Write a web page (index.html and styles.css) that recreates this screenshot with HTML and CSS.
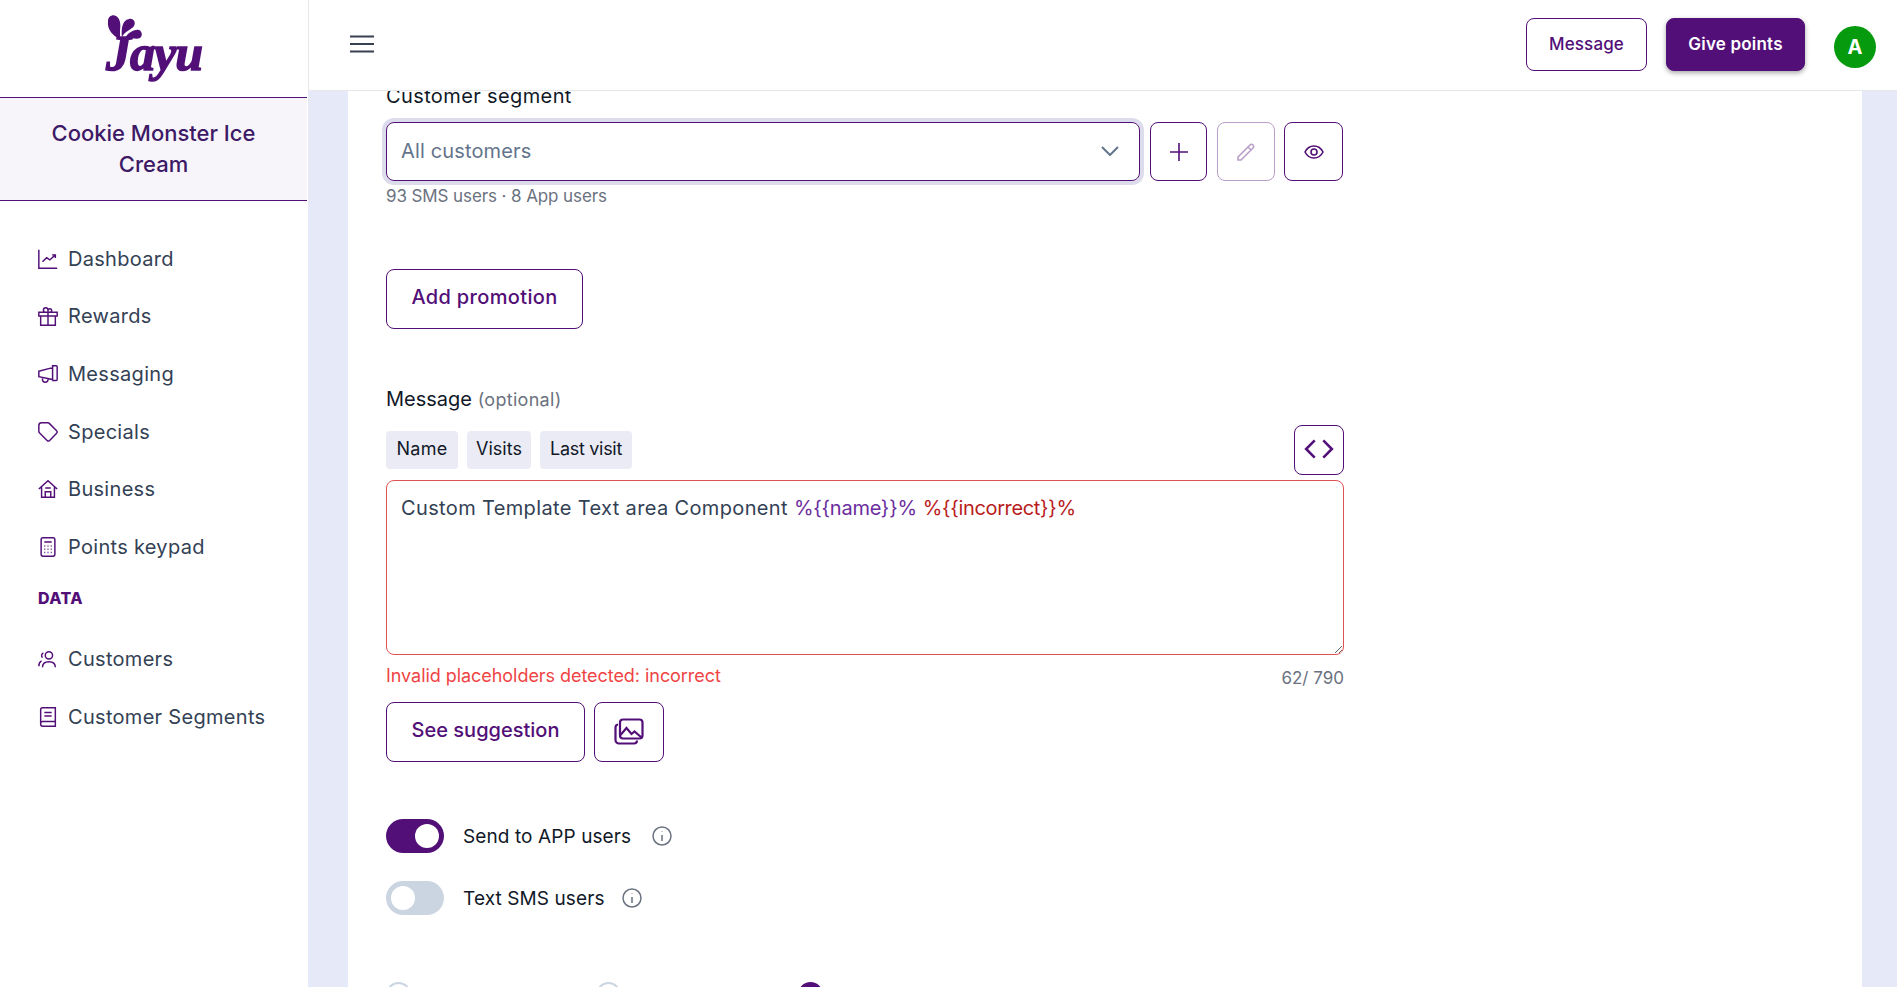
FILE: index.html
```html
<!DOCTYPE html>
<html lang="en">

<head>
    <meta charset="UTF-8">
    <meta name="viewport" content="width=device-width, initial-scale=1.0">
    <title>Create Campaign</title>
    <link rel="stylesheet" href="styles.css">
</head>

<body>
    <aside class="sidebar">
        <div class="logo">
            <svg class="logo-drops" viewBox="104 12 42 30" width="42" height="30">
                <path d="M120 39C113 36 107 30 108 21C108 16 113 14 116 16C120 18 121 24 120 30C120 33 120 36 120 39Z" />
                <path d="M122 37C121 30 122 20 129 19C134 18 136 23 134 26C131 30 125 31 122 37Z" />
                <path d="M125 38C128 33 134 29 139 30C142 31 143 36 140 38C136 40 130 37 125 38Z" />
            </svg>
            <span class="logo-text">Jayu</span>
        </div>
        <div class="store">Cookie Monster Ice Cream</div>
        <nav class="nav">
            <a class="nav-item">
                <svg class="nav-icon" viewBox="0 0 24 24"><path d="M2 2v20h20M6 15l4.500-4.500 3.500 2.500 6-5.500M16.500 7.500H20V11" /></svg>
                Dashboard
            </a>
            <a class="nav-item">
                <svg class="nav-icon" viewBox="0 0 24 24"><path d="M12 8v14m0-14V6a2 2 0 112 2h-2zm0 0V5.500A2.500 2.500 0 109.500 8H12zM2 8h20v4H2zM4 12v10h16V12" /></svg>
                Rewards
            </a>
            <a class="nav-item">
                <svg class="nav-icon" viewBox="0 0 24 24"><path d="M2 9l15-4v13L2 15zM17 3h4a1 1 0 011 1v14a1 1 0 01-1 1h-4zM6 16v2a3 3 0 006 0v-1" /></svg>
                Messaging
            </a>
            <a class="nav-item">
                <svg class="nav-icon" viewBox="0 0 24 24"><path d="M7 7h.01M7 2h5c.500 0 1 .2 1.400.6l8 8a2 2 0 010 2.800l-7.600 7.800a2 2 0 01-2.800 0l-8.400-8.400A2 2 0 012 11V5a3 3 0 013-3z" /></svg>
                Specials
            </a>
            <a class="nav-item">
                <svg class="nav-icon" viewBox="0 0 24 24"><path d="M2 12L12 3l10 9M5 10v11h14V10M9 21v-6h6v6M9 11h6" /></svg>
                Business
            </a>
            <a class="nav-item">
                <svg class="nav-icon" viewBox="0 0 24 24"><rect x="4.500" y="2" width="15" height="20" rx="2" /><path d="M8 6.500h8M8 11h1M11.500 11h1M15 11h1M8 14.500h1M11.500 14.500h1M15 14.500h1M8 18h1M11.500 18h1M15 18h1" /></svg>
                Points keypad
            </a>
            <div class="nav-title">DATA</div>
            <a class="nav-item">
                <svg class="nav-icon" viewBox="0 0 24 24"><circle cx="13" cy="8" r="4" /><path d="M6 21c0-4 3-6 7-6s7 2 7 6M7 5.500a3 3 0 00-1 5M2 20c0-3 1-5 3-6" /></svg>
                Customers
            </a>
            <a class="nav-item">
                <svg class="nav-icon" viewBox="0 0 24 24"><path d="M4 19V4a2 2 0 012-2h14v20H6a2 2 0 01-2-2v-1a2 2 0 012-2h14M8 7h8M8 11h8" /></svg>
                Customer Segments
            </a>
        </nav>
    </aside>

    <div class="page">
        <header class="topbar">
            <button class="menu-btn" aria-label="Menu">
                <svg viewBox="0 0 24 18" width="24" height="18"><path d="M0 1.500h24M0 9h24M0 16.500h24" /></svg>
            </button>
            <div class="top-actions">
                <button class="btn btn-top">Message</button>
                <button class="btn btn-top btn-solid">Give points</button>
                <div class="avatar">A</div>
            </div>
        </header>

        <main class="main">
            <form class="card">
                <label class="label segment-label">Customer segment</label>
                <div class="segment-row">
                    <div class="select">
                        All customers
                        <svg class="chevron" viewBox="0 0 18 10" width="18" height="10"><path d="M1 1l8 8 8-8" /></svg>
                    </div>
                    <button type="button" class="btn icon-btn plus-btn">
                        <svg viewBox="0 0 20 20" width="20" height="20"><path d="M10 1v18M1 10h18" /></svg>
                    </button>
                    <button type="button" class="btn icon-btn pencil-btn">
                        <svg viewBox="0 0 20 20" width="20" height="20"><path d="M2 15L14 3a2 2 0 013 0 2 2 0 010 3L5 18H2zM12 5l3 3" /></svg>
                    </button>
                    <button type="button" class="btn icon-btn eye-btn">
                        <svg viewBox="0 0 20 20" width="20" height="20"><path d="M1 10c2-4 5-6 9-6s7 2 9 6c-2 4-5 6-9 6s-7-2-9-6z" /><circle cx="10" cy="10" r="3" /></svg>
                    </button>
                </div>
                <p class="hint">93 SMS users · 8 App users</p>

                <button type="button" class="btn btn-large promo-btn">Add promotion</button>

                <label class="label msg-label">Message <span class="optional">(optional)</span></label>
                <div class="tag-row">
                    <span class="tag tag-name">Name</span>
                    <span class="tag tag-visits">Visits</span>
                    <span class="tag tag-last">Last visit</span>
                    <button type="button" class="btn code-btn">
                        <svg viewBox="0 0 28 20" width="30" height="22"><path d="M10 2L2 10l8 8M18 2l8 8-8 8" /></svg>
                    </button>
                </div>
                <div class="textarea">Custom Template Text area Component <span class="ph-ok">%{{name}}%</span> <span class="ph-bad">%{{incorrect}}%</span></div>
                <div class="textarea-foot">
                    <span class="error">Invalid placeholders detected: incorrect</span>
                    <span class="count">62/ 790</span>
                </div>
                <div class="suggest-row">
                    <button type="button" class="btn btn-large suggest-btn">See suggestion</button>
                    <button type="button" class="btn image-btn">
                        <svg viewBox="0 0 30 27" width="30" height="27"><rect x="6" y="1.500" width="22.500" height="19" rx="3" /><path d="M4 6.500a3 3 0 00-2.500 3V22a3.500 3.500 0 003.500 3.500h15a3 3 0 003-3M6.500 17l6-7 5 6 3-2.500 7 6" /></svg>
                    </button>
                </div>

                <div class="toggle-row first-toggle">
                    <span class="toggle on"><span class="knob"></span></span>
                    <span class="toggle-text">Send to APP users</span>
                    <svg class="info info-app" viewBox="0 0 20 20" width="20" height="20"><circle cx="10" cy="10" r="9" /><path d="M10 9v6M10 5.500v.5" /></svg>
                </div>
                <div class="toggle-row">
                    <span class="toggle"><span class="knob"></span></span>
                    <span class="toggle-text">Text SMS users</span>
                    <svg class="info info-sms" viewBox="0 0 20 20" width="20" height="20"><circle cx="10" cy="10" r="9" /><path d="M10 9v6M10 5.500v.5" /></svg>
                </div>

                <div class="radio-row">
                    <span class="radio radio-first"></span>
                    <span class="radio"></span>
                    <span class="radio checked"></span>
                </div>
            </form>
        </main>
    </div>
</body>
</html>
```
FILE: styles.css
```css
* {
    box-sizing: border-box;
}
body {
    margin: 0;
    height: 987px;
    display: flex;
    overflow: hidden;
    font-family: "Inter", "Noto Sans", sans-serif;
    color: #111827;
    background-color: #e6e9f8;
}
button {
    font-family: inherit;
    cursor: pointer;
}

/* sidebar */
.sidebar {
    width: 308px;
    flex-shrink: 0;
    background-color: white;
}
.logo {
    height: 97px;
    display: flex;
    flex-direction: column;
    align-items: center;
    padding-top: 12px;
}
.logo-drops {
    fill: #520f78;
    margin-right: 58px;
    flex-shrink: 0;
}
.logo-text {
    font-family: "Liberation Serif", serif;
    font-style: italic;
    font-weight: bold;
    font-size: 50px;
    line-height: 40px;
    letter-spacing: -1px;
    margin-top: -9px;
    color: #520f78;
    -webkit-text-stroke: 1.5px #520f78;
}
.store {
    width: 307px;
    height: 104px;
    padding: 20px 40px 0;
    border-top: 1px solid #520f78;
    border-bottom: 1px solid #520f78;
    background-color: #f7f5fa;
    color: #3e1a66;
    font-size: 22px;
    font-weight: 500;
    line-height: 31px;
    text-align: center;
}
.nav {
    padding: 29px 0 0 37px;
}
.nav-item {
    height: 57.6px;
    display: flex;
    align-items: center;
    gap: 9px;
    font-size: 20px;
    letter-spacing: 0.3px;
    color: #334155;
}
.nav-icon {
    width: 22px;
    height: 22px;
    fill: none;
    stroke: #520f78;
    stroke-width: 1.6;
}
.nav-title {
    height: 55px;
    margin-left: 1px;
    padding-top: 12px;
    font-size: 16px;
    line-height: 20px;
    font-weight: 800;
    letter-spacing: 0.4px;
    color: #520f78;
}

/* top bar */
.page {
    flex: 1;
    display: flex;
    flex-direction: column;
    min-width: 0;
}
.topbar {
    height: 91px;
    flex-shrink: 0;
    display: flex;
    align-items: center;
    justify-content: space-between;
    padding: 0 21px 2px 41px;
    background-color: white;
    border-left: 1px solid #e5e7eb;
    border-bottom: 1px solid #e5e7eb;
}
.menu-btn {
    padding: 0;
    border: none;
    background: none;
    display: flex;
}
.menu-btn svg {
    fill: none;
    stroke: #374151;
    stroke-width: 2;
}
.top-actions {
    display: flex;
    align-items: center;
}
.btn {
    background-color: white;
    border: 1px solid #520f78;
    border-radius: 8px;
    color: #520f78;
    font-weight: 500;
    display: flex;
    align-items: center;
    justify-content: center;
}
.btn svg {
    fill: none;
    stroke: #520f78;
    stroke-width: 1.6;
}
.btn-top {
    width: 121px;
    height: 53px;
    font-size: 17px;
    letter-spacing: 0.15px;
    margin-right: 19px;
}
.btn-solid {
    width: 139px;
    margin-right: 29px;
    background-color: #520f78;
    color: white;
    font-weight: 600;
    letter-spacing: 0.2px;
    box-shadow: 0 2px 5px rgba(0, 0, 0, 0.35);
}
.avatar {
    width: 42px;
    height: 42px;
    border-radius: 50%;
    margin-top: 5px;
    background-color: #069a0e;
    color: white;
    font-size: 20px;
    font-weight: 700;
    display: flex;
    align-items: center;
    justify-content: center;
}

/* form card */
.main {
    flex: 1;
    overflow: hidden;
    padding: 0 35px 0 40px;
}
.card {
    height: 940px;
    margin-top: -8px;
    padding: 0 38px;
    background-color: white;
}
.label {
    display: block;
    font-size: 20px;
    line-height: 26px;
}
.segment-label {
    letter-spacing: 0.38px;
}
.segment-row {
    display: flex;
    margin-top: 13px;
    width: 958px;
    gap: 10px;
}
.select {
    width: 754px;
    height: 59px;
    padding: 0 20px 2px 14px;
    display: flex;
    align-items: center;
    justify-content: space-between;
    border: 1px solid #520f78;
    border-radius: 8px;
    box-shadow: 0 0 0 4px #dcdcec;
    font-size: 20px;
    letter-spacing: 0.15px;
    color: #64748b;
}
.chevron {
    fill: none;
    stroke: #64748b;
    stroke-width: 2;
}
.icon-btn {
    height: 59px;
    padding: 0;
}
.plus-btn {
    width: 57px;
}
.pencil-btn {
    width: 58px;
    opacity: 0.4;
}
.eye-btn {
    width: 59px;
    margin-left: -1px;
}
.hint {
    margin: 4px 0 0;
    font-size: 17px;
    line-height: 22px;
    letter-spacing: -0.1px;
    color: #6b7280;
}
.btn-large {
    height: 60px;
    padding: 0 0 4px;
    font-size: 20px;
}
.promo-btn {
    width: 197px;
    margin-top: 62px;
    letter-spacing: 0.35px;
}
.msg-label {
    margin-top: 57px;
}
.optional {
    font-size: 18px;
    letter-spacing: 0.3px;
    color: #6b7280;
}
.tag-row {
    width: 958px;
    margin-top: 12px;
    height: 50px;
    display: flex;
    align-items: center;
    gap: 9px;
}
.tag {
    height: 38px;
    padding-bottom: 3px;
    display: flex;
    align-items: center;
    justify-content: center;
    border-radius: 4px;
    background-color: #ebebf5;
    font-size: 18px;
}
.tag-name {
    width: 72px;
    letter-spacing: 0.3px;
}
.tag-visits {
    width: 64px;
}
.tag-last {
    width: 92px;
    letter-spacing: -0.3px;
}
.code-btn {
    width: 50px;
    height: 50px;
    margin-left: auto;
    padding: 0 0 2px;
}
.code-btn svg {
    stroke-width: 2.4;
}
.textarea {
    width: 958px;
    height: 175px;
    margin-top: 5px;
    padding: 13px 14px;
    border: 1px solid #e05252;
    border-radius: 8px;
    font-size: 20px;
    line-height: 28px;
    letter-spacing: 0.36px;
    color: #334155;
    resize: vertical;
    overflow: auto;
}
.ph-ok {
    letter-spacing: -0.25px;
    color: #6b2d9e;
}
.ph-bad {
    letter-spacing: -0.35px;
    color: #b91c1c;
}
.textarea-foot {
    width: 958px;
    height: 47px;
    display: flex;
    justify-content: space-between;
    align-items: flex-start;
    padding-top: 8px;
    font-size: 18px;
    line-height: 26px;
}
.error {
    color: #ef4444;
    letter-spacing: -0.05px;
}
.count {
    margin-top: 2px;
    font-size: 17px;
    color: #6b7280;
}
.suggest-row {
    display: flex;
    gap: 9px;
}
.suggest-btn {
    width: 199px;
}
.image-btn {
    width: 70px;
    height: 60px;
    padding: 0 0 2px;
}
.image-btn svg {
    stroke-width: 2.2;
}
.toggle-row {
    height: 34px;
    margin-top: 28px;
    display: flex;
    align-items: center;
}
.first-toggle {
    margin-top: 57px;
}
.toggle {
    width: 58px;
    height: 34px;
    padding: 5px;
    border-radius: 17px;
    background-color: #cbd5e1;
    display: flex;
    margin-right: 19px;
}
.toggle.on {
    background-color: #520f78;
    justify-content: flex-end;
}
.knob {
    width: 24px;
    height: 24px;
    border-radius: 50%;
    background-color: white;
}
.toggle-text {
    font-size: 19px;
    letter-spacing: 0.1px;
}
.info {
    fill: none;
    stroke: #6b7280;
    stroke-width: 1.5;
}
.info-app {
    margin-left: 21px;
}
.info-sms {
    margin-left: 17px;
}
.radio-row {
    display: flex;
    margin-top: 67px;
    gap: 177px;
}
.radio {
    width: 25px;
    height: 25px;
    border-radius: 50%;
    border: 2px solid #cbd5e1;
}
.radio-first {
    margin-right: 8px;
}
.radio.checked {
    border: none;
    background-color: #520f78;
}
```
